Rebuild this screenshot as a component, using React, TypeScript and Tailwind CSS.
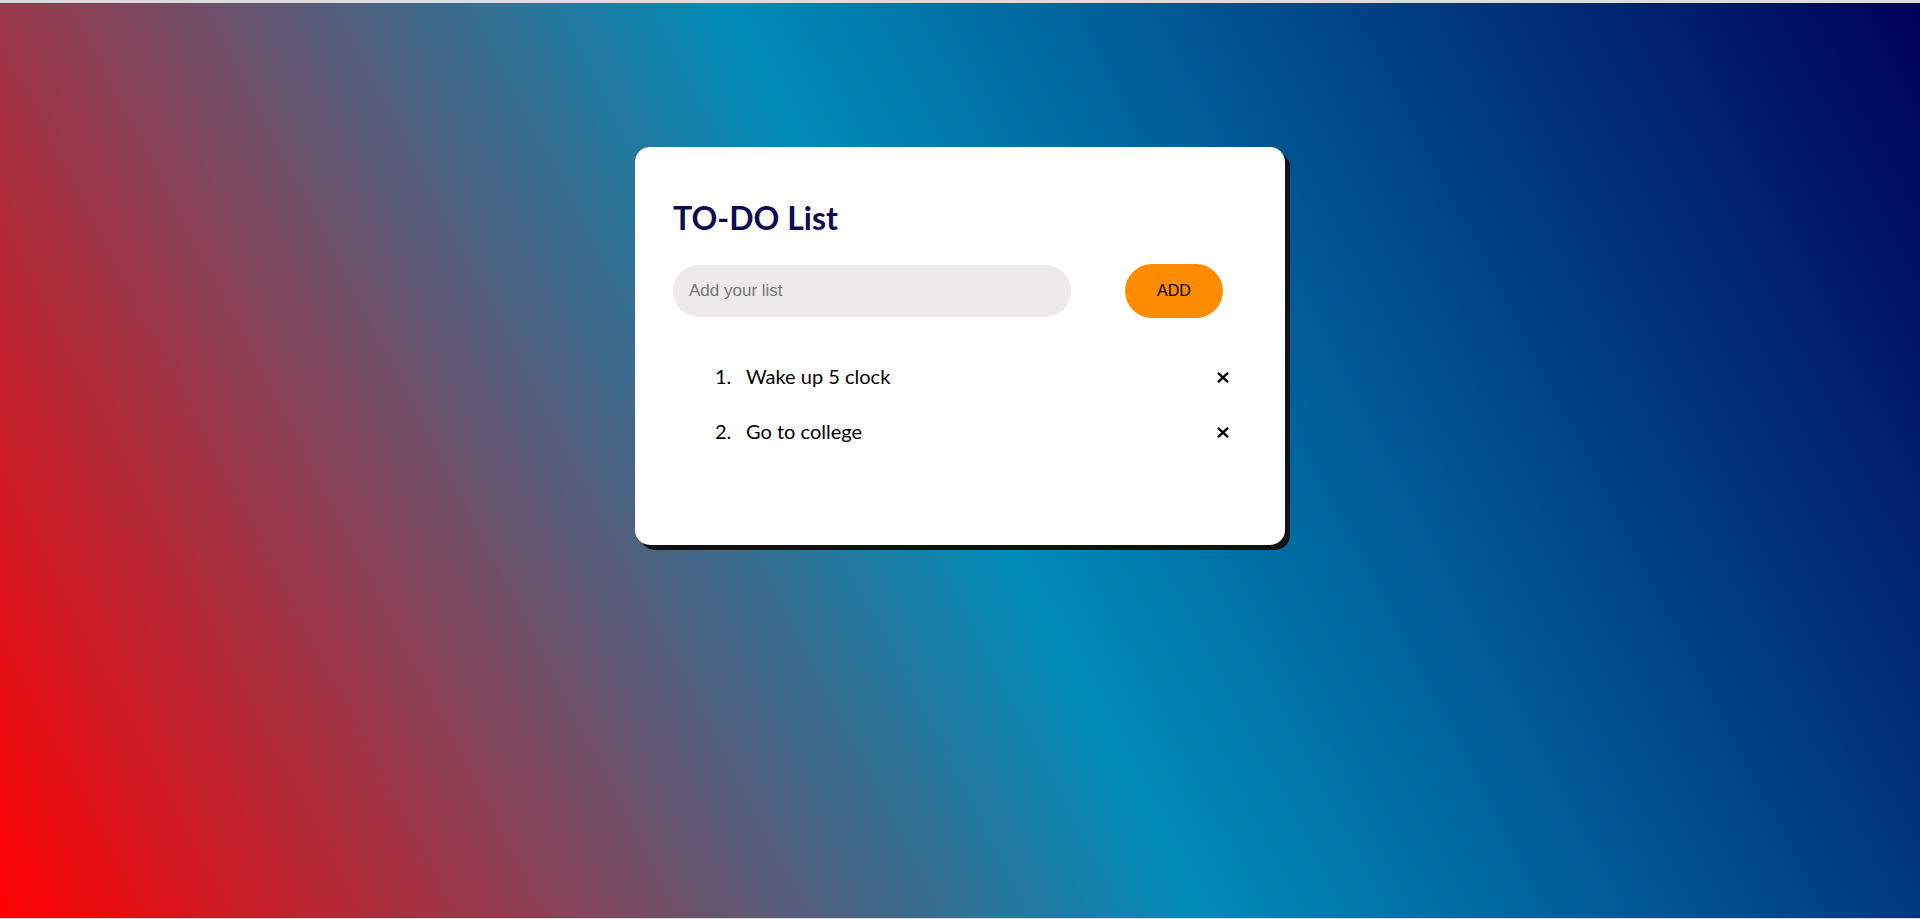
import React, { useState } from 'react';

const XIcon: React.FC = () => (
    <svg width="12" height="11" viewBox="0 0 12 11" fill="none">
        <path d="M1 0.8 L11 10.2 M11 0.8 L1 10.2" stroke="#000" strokeWidth="2.3" />
    </svg>
);

const App: React.FC = () => {
    const [items, setItems] = useState<string[]>(['Wake up 5 clock', 'Go to college']);
    const [text, setText] = useState('');

    const addItem = () => {
        if (!text.trim()) return;
        setItems([...items, text.trim()]);
        setText('');
    };

    const removeItem = (index: number) => {
        setItems(items.filter((_, i) => i !== index));
    };

    return (
        <div className="w-full bg-[#dcdcde] pt-[3px] pb-[1px]">
            <div className="h-[915px] w-full pt-[144px] bg-[linear-gradient(62.5deg,#ff0000_0%,#008cb8_50%,#00005a_100%)]">
                <div className="mx-auto h-[398px] w-[650px] rounded-[15px] bg-white px-[38px] pt-[52px] shadow-[5px_5px_0_#111]">
                    <h2 className="font-['Lato',sans-serif] text-[32px] leading-[38px] font-bold text-[#0f0a52]">
                        TO-DO List
                    </h2>
                    <div className="mt-[27px] flex items-center">
                        <input
                            type="text"
                            placeholder="Add your list"
                            value={text}
                            onChange={(e) => setText(e.target.value)}
                            className="h-[52px] w-[398px] rounded-full bg-[#edebe9] px-4 font-['Liberation_Sans',sans-serif] text-[17px] text-black placeholder:text-[#757575] outline-none"
                        />
                        <button
                            type="button"
                            onClick={addItem}
                            className="ml-[54px] h-[54px] w-[98px] rounded-full bg-[#ff8c00] font-['Liberation_Sans',sans-serif] text-[16px] text-black"
                        >
                            ADD
                        </button>
                    </div>
                    <ol className="ml-[42px] mt-[46px] flex w-[514px] flex-col gap-[31px] font-['Lato',sans-serif] text-[20px] text-black">
                        {items.map((item, index) => (
                            <li key={index} className="flex h-[24px] items-center justify-between leading-[24px]">
                                <div className="flex">
                                    <span className="w-[31px]">{index + 1}.</span>
                                    <span>{item}</span>
                                </div>
                                <button type="button" onClick={() => removeItem(index)} className="flex translate-y-[1px] items-center">
                                    <XIcon />
                                </button>
                            </li>
                        ))}
                    </ol>
                </div>
            </div>
        </div>
    );
};

export default App;
